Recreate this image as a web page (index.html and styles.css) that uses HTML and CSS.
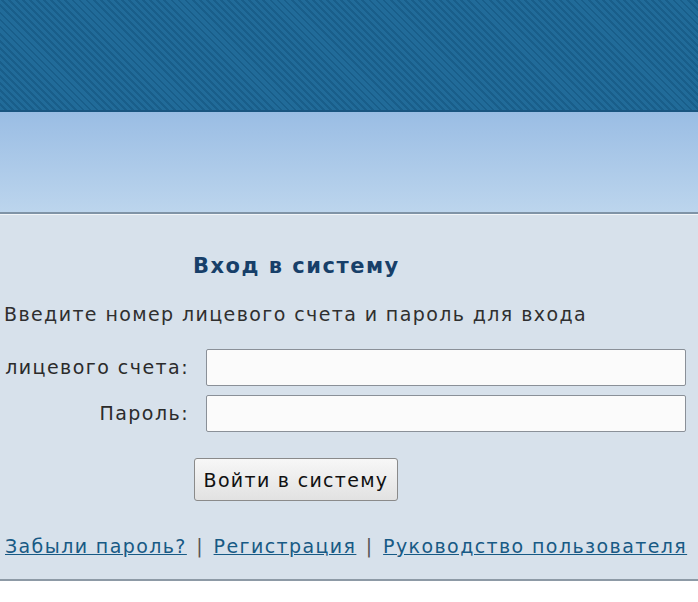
FILE: index.html
```html
<!DOCTYPE html>
<html lang="ru">
<head>
    <meta charset="UTF-8">
    <title>Вход в систему</title>
    <link rel="stylesheet" href="styles.css">
</head>
<body>
    <div class="header"></div>
    <div class="subheader"></div>

    <div class="panel">
        <h1 class="title">Вход в систему</h1>
        <p class="hint">Введите номер лицевого счета и пароль для входа</p>

        <form class="login-form">
            <label class="label" for="account">лицевого счета:</label>
            <input class="field" type="text" id="account">
            <label class="label" for="password">Пароль:</label>
            <input class="field" type="password" id="password">
            <div class="actions">
                <button class="btn" type="button">Войти в систему</button>
            </div>
        </form>

        <div class="links">
            <a href="#">Забыли пароль?</a>
            <span class="sep">|</span>
            <a href="#">Регистрация</a>
            <span class="sep">|</span>
            <a href="#">Руководство пользователя</a>
        </div>
    </div>
</body>
</html>
```

FILE: styles.css
```css
body {
    margin: 0;
    padding: 0;
    background: #ffffff;
    font-family: "DejaVu Sans", Verdana, sans-serif;
    letter-spacing: 1.4px;
    line-height: 21px;
    color: #2b2b2b;
    overflow: hidden;
}
/* Верхняя полоса с диагональной штриховкой */
.header {
    height: 110px;
    background-color: #216b99;
    background-image: repeating-linear-gradient(45deg, #216b99 0, #216b99 3px, #195e8a 3px, #195e8a 5px);
    border-bottom: 2px solid #1a5580;
}
.subheader {
    height: 100px;
    background: linear-gradient(to bottom, #9abde4, #bcd5ed);
    border-bottom: 2px solid #7f93a6;
}
.panel {
    background: #d7e1eb;
    border-top: 1px solid #f2f5f8;
    border-bottom: 2px solid #8d9aa6;
    height: 367px;
    box-sizing: border-box;
    padding-top: 39px;
}
.title {
    margin: 0 0 0 193px;
    font-size: 21px;
    line-height: 24px;
    letter-spacing: 1.5px;
    font-weight: bold;
    color: #173f69;
}
.hint {
    margin: 26px 0 0 4px;
    font-size: 19px;
    color: #2f2f2f;
}
.login-form {
    display: grid;
    grid-template-columns: 189px 480px;
    column-gap: 17px;
    row-gap: 9px;
    align-items: center;
    margin-top: 24px;
}
.label {
    text-align: right;
    white-space: nowrap;
    font-size: 19px;
    letter-spacing: 1.45px;
    color: #2b2b2b;
}
.field {
    height: 37px;
    box-sizing: border-box;
    border: 1px solid #8a9098;
    border-radius: 2px;
    background: #fbfbfb;
    font-size: 16px;
}
.actions {
    grid-column: 2;
    margin-top: 17px;
    margin-left: -12px;
}
.btn {
    width: 204px;
    height: 43px;
    padding: 0;
    font-family: "DejaVu Sans", Verdana, sans-serif;
    font-size: 19px;
    letter-spacing: 1.3px;
    color: #111111;
    background: linear-gradient(to bottom, #f7f7f7, #e2e2e2);
    border: 1px solid #8a8a8a;
    border-radius: 3px;
}
.links {
    margin: 35px 0 0 5px;
    font-size: 19px;
    letter-spacing: 1.4px;
}
.links a {
    color: #175a85;
    text-decoration: underline;
}
.sep {
    color: #555555;
    margin: 0 2px;
}
```
